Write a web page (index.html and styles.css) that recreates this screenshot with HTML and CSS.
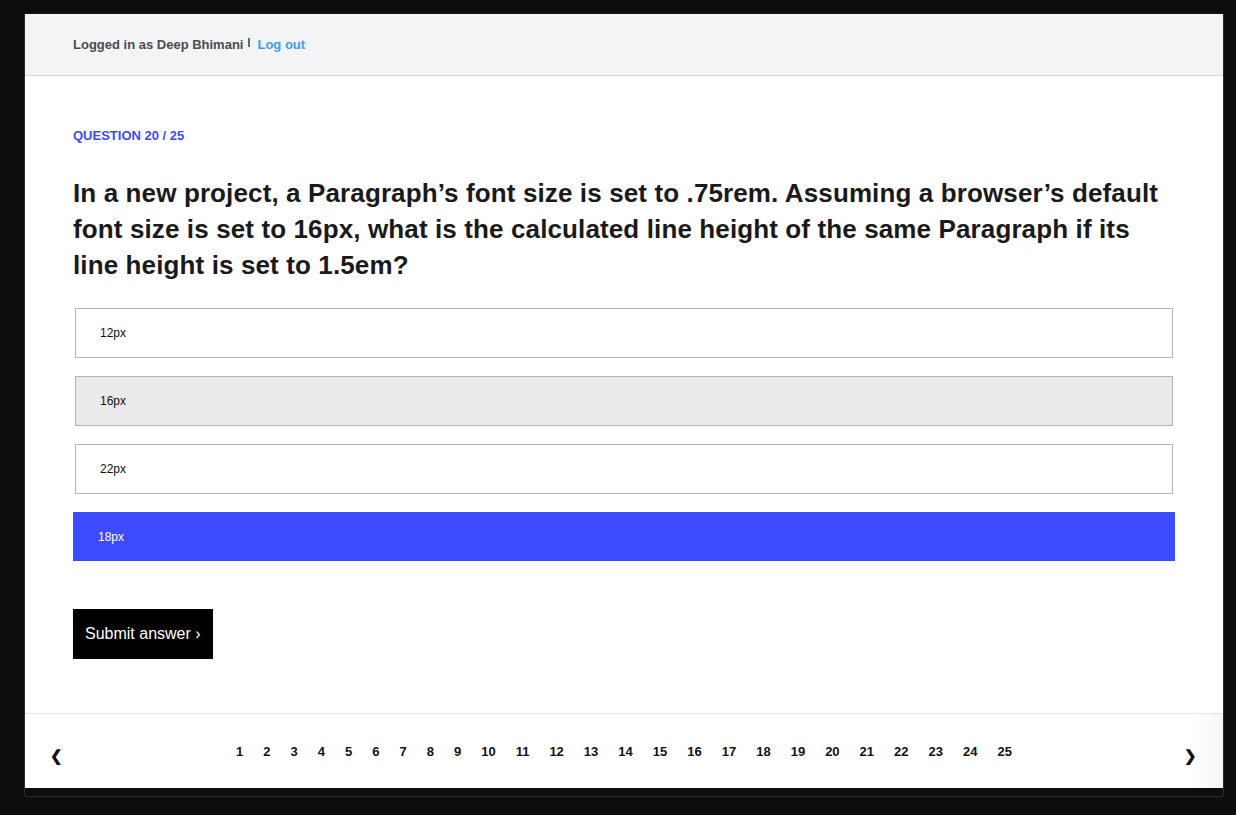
FILE: index.html
```html
<!DOCTYPE html>
<html lang="en">
<head>
<meta charset="utf-8">
<title>Quiz</title>
<link rel="stylesheet" href="styles.css">
</head>
<body>
<div class="frame">
  <div class="app">
    <header class="topbar">
      <span class="user">Logged in as Deep Bhimani</span>
      <span class="sep" aria-hidden="true"></span>
      <a class="logout" href="#">Log out</a>
    </header>
    <main class="main">
      <div class="label">QUESTION 20 / 25</div>
      <h1 class="question">In a new project, a Paragraph’s font size is set to .75rem. Assuming a browser’s default font size is set to 16px, what is the calculated line height of the same Paragraph if its line height is set to 1.5em?</h1>
      <ul class="options">
        <li class="option">12px</li>
        <li class="option option-hover">16px</li>
        <li class="option">22px</li>
        <li class="option option-selected">18px</li>
      </ul>
      <button class="submit">Submit answer ›</button>
    </main>
    <footer class="pager">
      <span class="arrow">❮</span>
      <ol class="pages">
        <li>1</li><li>2</li><li>3</li><li>4</li><li>5</li><li>6</li><li>7</li><li>8</li><li>9</li><li>10</li><li>11</li><li>12</li><li>13</li><li>14</li><li>15</li><li>16</li><li>17</li><li>18</li><li>19</li><li>20</li><li>21</li><li>22</li><li>23</li><li>24</li><li>25</li>
      </ol>
      <span class="arrow arrow-right">❯</span>
    </footer>
  </div>
</div>
</body>
</html>
```

FILE: styles.css
```css
* { box-sizing: border-box; }
html, body { margin: 0; }
body {
  background: #0d0d0d;
  padding: 13px 12px 18px 24px;
  font-family: "Liberation Sans", Arial, Helvetica, sans-serif;
  color: #1a1a1a;
}
.frame {
  border: 1px solid #2c2c2c;
  border-top-color: #1a1a1a;
  border-radius: 3px;
  padding-bottom: 8px;
  background: #0d0d0d;
}
.app {
  background: #fff;
}
.topbar {
  height: 62px;
  background: #f3f4f6;
  border-bottom: 1px solid #d6d6d8;
  display: flex;
  align-items: center;
  padding-left: 48px;
  font-size: 13px;
  font-weight: bold;
}
.user { color: #4a4a50; }
.sep {
  display: inline-block;
  width: 2px;
  height: 9px;
  background: #6a6a6e;
  margin: 0 7px 0 5px;
  position: relative;
  top: -2px;
}
.logout { color: #3a9cf4; text-decoration: none; }
.main {
  padding: 52px 48px 54px 48px;
}
.label {
  color: #3d4cf9;
  font-size: 13px;
  font-weight: bold;
  line-height: 15px;
}
.question {
  margin: 32px 0 25px;
  font-size: 26px;
  line-height: 36px;
  font-weight: bold;
  letter-spacing: 0.12px;
  color: #1a1a1a;
}
.options {
  list-style: none;
  margin: 0;
  padding: 0;
}
.option {
  height: 50px;
  margin: 0 2px 18px;
  border: 1px solid #b4b4b4;
  padding-left: 24px;
  display: flex;
  align-items: center;
  font-size: 12px;
  color: #111;
  background: #fff;
}
.option-hover { background: #eaeaea; }
.option-selected {
  margin: 0;
  height: 49px;
  border-color: #3d4bff;
  background: #3d4bff;
  color: #fff;
}
.submit {
  display: block;
  margin-top: 48px;
  height: 50px;
  width: 140px;
  background: #000;
  color: #fff;
  border: 0;
  border-radius: 0;
  padding: 0 12px;
  text-align: left;
  font-family: "Liberation Sans", Arial, sans-serif;
  font-size: 16px;
  cursor: pointer;
}
.pager {
  height: 75px;
  border-top: 1px solid #e4e4e4;
  display: flex;
  align-items: center;
  padding: 0 24px;
  background: linear-gradient(to right, #fff 0, #fff calc(100% - 30px), #f5f5f5 100%);
}
.arrow {
  width: 40px;
  font-size: 15px;
  font-weight: bold;
  color: #111;
  position: relative;
  top: 5px;
  padding-left: 1px;
}
.arrow-right { text-align: right; padding-right: 2px; padding-left: 0; }
.pages {
  flex: 1;
  list-style: none;
  margin: 0;
  padding: 0;
  display: flex;
  justify-content: center;
  font-size: 13px;
  font-weight: bold;
  color: #111;
}
.pages li { padding: 0 10px; }
```
